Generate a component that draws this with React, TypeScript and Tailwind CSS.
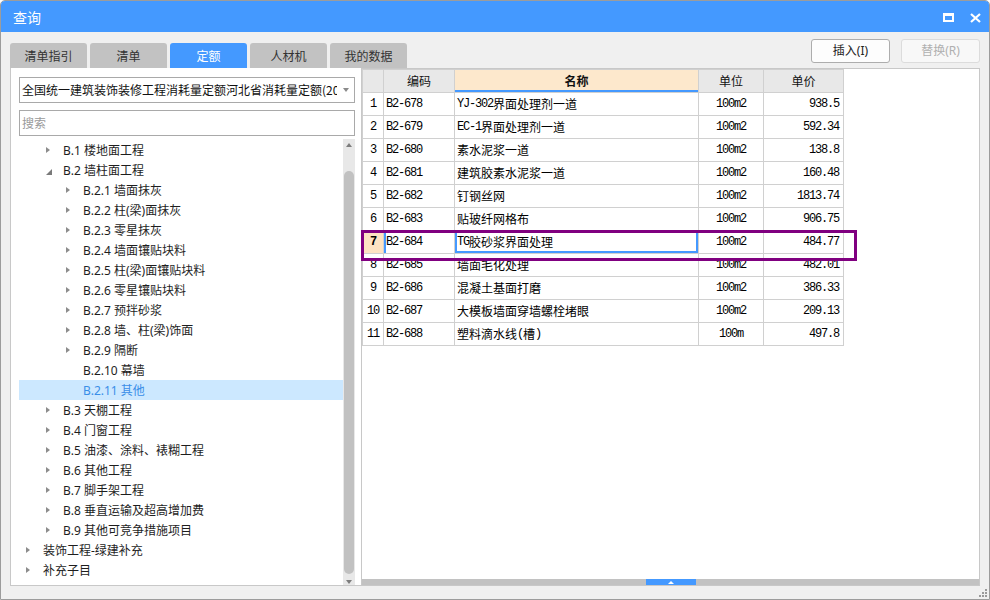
import React from "react";

type Node = { label: string; level: number; state: "c" | "e" | "n"; selected?: boolean };

const tree: Node[] = [
  { label: "B.1 楼地面工程", level: 1, state: "c" },
  { label: "B.2 墙柱面工程", level: 1, state: "e" },
  { label: "B.2.1 墙面抹灰", level: 2, state: "c" },
  { label: "B.2.2 柱(梁)面抹灰", level: 2, state: "c" },
  { label: "B.2.3 零星抹灰", level: 2, state: "c" },
  { label: "B.2.4 墙面镶贴块料", level: 2, state: "c" },
  { label: "B.2.5 柱(梁)面镶贴块料", level: 2, state: "c" },
  { label: "B.2.6 零星镶贴块料", level: 2, state: "c" },
  { label: "B.2.7 预拌砂浆", level: 2, state: "c" },
  { label: "B.2.8 墙、柱(梁)饰面", level: 2, state: "c" },
  { label: "B.2.9 隔断", level: 2, state: "c" },
  { label: "B.2.10 幕墙", level: 2, state: "n" },
  { label: "B.2.11 其他", level: 2, state: "n", selected: true },
  { label: "B.3 天棚工程", level: 1, state: "c" },
  { label: "B.4 门窗工程", level: 1, state: "c" },
  { label: "B.5 油漆、涂料、裱糊工程", level: 1, state: "c" },
  { label: "B.6 其他工程", level: 1, state: "c" },
  { label: "B.7 脚手架工程", level: 1, state: "c" },
  { label: "B.8 垂直运输及超高增加费", level: 1, state: "c" },
  { label: "B.9 其他可竞争措施项目", level: 1, state: "c" },
  { label: "装饰工程-绿建补充", level: 0, state: "c" },
  { label: "补充子目", level: 0, state: "c" },
];

const rows = [
  ["1", "B2-678", "YJ-302界面处理剂一道", "100m2", "938.5"],
  ["2", "B2-679", "EC-1界面处理剂一道", "100m2", "592.34"],
  ["3", "B2-680", "素水泥浆一道", "100m2", "138.8"],
  ["4", "B2-681", "建筑胶素水泥浆一道", "100m2", "160.48"],
  ["5", "B2-682", "钉钢丝网", "100m2", "1813.74"],
  ["6", "B2-683", "贴玻纤网格布", "100m2", "906.75"],
  ["7", "B2-684", "TG胶砂浆界面处理", "100m2", "484.77"],
  ["8", "B2-685", "墙面毛化处理", "100m2", "482.01"],
  ["9", "B2-686", "混凝土基面打磨", "100m2", "386.33"],
  ["10", "B2-687", "大模板墙面穿墙螺栓堵眼", "100m2", "209.13"],
  ["11", "B2-688", "塑料滴水线(槽)", "100m", "497.8"],
];

function Mixed({ text }: { text: string }) {
  const parts = text.split(/([\x00-\x7F]+)/).filter((p) => p.length > 0);
  return (
    <>
      {parts.map((p, i) =>
        /^[\x00-\x7F]+$/.test(p) ? (
          <span key={i} className="font-['Liberation_Mono',monospace] text-[12px] tracking-[-1.2px]">
            {p}
          </span>
        ) : (
          <span key={i} className="font-['Noto_Sans_CJK_SC',sans-serif] text-[12px]">
            {p}
          </span>
        )
      )}
    </>
  );
}

function Arrow({ state }: { state: Node["state"] }) {
  if (state === "c")
    return (
      <span className="block w-0 h-0 border-l-[4px] border-l-[#8c8c8c] border-y-[3.5px] border-y-transparent" />
    );
  if (state === "e")
    return (
      <svg width="6" height="6" viewBox="0 0 6 6" className="block mt-[3px]">
        <polygon points="6,0 6,6 0,6" fill="#7a7a7a" />
      </svg>
    );
  return null;
}

export default function App() {
  const tabs = ["清单指引", "清单", "定额", "人材机", "我的数据"];
  return (
    <div className="relative w-[990px] h-[600px] flex flex-col bg-[#f0f0f0] border border-[#9c9c9c] rounded-t-[5px] overflow-hidden font-['Noto_Sans','Noto_Sans_CJK_SC',sans-serif] text-[#1e1e1e]">
      {/* title bar */}
      <div className="h-[31px] shrink-0 bg-[#4499ff] flex items-center justify-between pl-[12px] pr-[8px]">
        <span className="text-white text-[14px] font-['Noto_Sans_CJK_SC',sans-serif] mt-[2px]">查询</span>
        <div className="flex items-center gap-[16px] mt-[2px]">
          <svg width="11" height="9" viewBox="0 0 11 9">
            <rect x="1" y="1.5" width="9" height="6.5" fill="none" stroke="white" strokeWidth="2" />
            <rect x="0" y="0" width="11" height="3" fill="white" />
          </svg>
          <svg width="11" height="10" viewBox="0 0 11 10">
            <path d="M1 1 L10 9 M10 1 L1 9" stroke="white" strokeWidth="2.2" />
          </svg>
        </div>
      </div>

      {/* tab row */}
      <div className="h-[36px] shrink-0 flex justify-between px-[9px]">
        <div className="flex items-end gap-[3px]">
          {tabs.map((t) => (
            <div
              key={t}
              className={
                t === "定额"
                  ? "w-[77px] h-[25px] rounded-t-[3px] bg-[#4499ff] text-white flex items-center justify-center text-[12px] font-['Noto_Sans_CJK_SC',sans-serif]"
                  : "w-[77px] h-[25px] rounded-t-[3px] bg-[#c2c2c2] text-[#333] flex items-center justify-center text-[12px] font-['Noto_Sans_CJK_SC',sans-serif]"
              }
            >
              {t}
            </div>
          ))}
        </div>
        <div className="flex gap-[11px] mt-[7px] h-[24px]">
          <div className="w-[79px] h-[24px] rounded-[3px] border border-[#adadad] bg-[#fdfdfd] flex items-center justify-center text-[12px] text-[#222]">
            插入(I)
          </div>
          <div className="w-[79px] h-[24px] rounded-[3px] border border-[#dcdcdc] bg-[#f8f8f8] flex items-center justify-center text-[12px] text-[#b0b0b0]">
            替换(R)
          </div>
        </div>
      </div>

      {/* main */}
      <div className="h-[518px] shrink-0 flex mx-[9px]">
        {/* left panel */}
        <div className="w-[351px] shrink-0 bg-white border-l border-b border-[#c8c8c8] pl-[8px] pr-[6px] pt-[9px] flex flex-col">
          <div className="h-[26px] shrink-0 border border-[#a9a9a9] flex items-center pl-[2px] pr-[4px] overflow-hidden">
            <span className="flex-1 min-w-0 overflow-hidden whitespace-nowrap text-[12px] text-[#111] font-['Noto_Sans_CJK_SC',sans-serif]">
              全国统一建筑装饰装修工程消耗量定额河北省消耗量定额(20
            </span>
            <span className="ml-[6px] mr-[1px] block w-0 h-0 border-t-[4px] border-t-[#8a8a8a] border-x-[3.5px] border-x-transparent" />
          </div>
          <div className="h-[26px] shrink-0 mt-[7px] border border-[#a9a9a9] flex items-center pl-[2px] text-[12px] text-[#9a9a9a] font-['Noto_Sans_CJK_SC',sans-serif]">
            搜索
          </div>
          <div className="flex-1 flex mt-[3px] min-h-0">
            <div className="flex-1 flex flex-col pt-[1px]">
              {tree.map((n) => (
                <div
                  key={n.label}
                  className={
                    n.selected
                      ? "h-[20px] shrink-0 flex items-center bg-[#cce8ff] text-[#3a8ee8]"
                      : "h-[20px] shrink-0 flex items-center"
                  }
                  style={{ paddingLeft: 7 + n.level * 20 }}
                >
                  <span className="w-[17px] shrink-0 flex items-center">
                    <Arrow state={n.state} />
                  </span>
                  <span className="text-[12px] whitespace-nowrap mt-[2px]">{n.label}</span>
                </div>
              ))}
            </div>
            <div className="w-[12px] shrink-0 bg-[#e8e8e8] flex flex-col items-center pt-[4px]">
              <span className="block w-0 h-0 border-b-[4px] border-b-[#7d7d7d] border-x-[3.5px] border-x-transparent" />
              <div className="mt-[24px] w-[10px] h-[403px] rounded-full bg-[#c1c1c1]" />
              <span className="mt-[6px] block w-0 h-0 border-t-[4px] border-t-[#7d7d7d] border-x-[3.5px] border-x-transparent" />
            </div>
          </div>
        </div>

        {/* right panel */}
        <div className="flex-1 bg-white border border-[#c8c8c8] flex flex-col">
          <div className="flex-1">
            <div className="w-[482px] border-l border-t border-[#d0d0d0]">
              <div className="flex h-[23px] border-b border-[#d0d0d0] text-[12px] font-['Noto_Sans_CJK_SC',sans-serif] text-[#111]">
                <div className="w-[21px] border-r border-[#d0d0d0] bg-[#e8e8e8]" />
                <div className="w-[71px] border-r border-[#d0d0d0] bg-[#e8e8e8] flex items-center justify-center">编码</div>
                <div className="w-[244px] border-r border-[#d0d0d0] bg-[#fde8cc] flex items-center justify-center font-bold shadow-[inset_0_-2px_0_#4499ff]">
                  名称
                </div>
                <div className="w-[65px] border-r border-[#d0d0d0] bg-[#e8e8e8] flex items-center justify-center">单位</div>
                <div className="w-[80px] border-r border-[#d0d0d0] bg-[#e8e8e8] flex items-center justify-center">单价</div>
              </div>
              {rows.map((r) => {
                const sel = r[0] === "7";
                return (
                  <div key={r[0]} className="flex h-[23px] border-b border-[#d0d0d0] text-black">
                    <div
                      className={
                        sel
                          ? "w-[21px] border-r border-[#d0d0d0] bg-[#fde3c3] flex items-center justify-center font-bold"
                          : "w-[21px] border-r border-[#d0d0d0] flex items-center justify-center"
                      }
                    >
                      <Mixed text={r[0]} />
                    </div>
                    <div
                      className={
                        sel
                          ? "w-[71px] border-r border-[#d0d0d0] flex items-center pl-[2px] shadow-[inset_2px_0_0_#4499ff]"
                          : "w-[71px] border-r border-[#d0d0d0] flex items-center pl-[2px]"
                      }
                    >
                      <Mixed text={r[1]} />
                    </div>
                    <div
                      className={
                        sel
                          ? "w-[244px] border-r border-[#d0d0d0] flex items-center pl-[2px] shadow-[inset_0_0_0_2px_#4499ff]"
                          : "w-[244px] border-r border-[#d0d0d0] flex items-center pl-[2px]"
                      }
                    >
                      <Mixed text={r[2]} />
                    </div>
                    <div className="w-[65px] border-r border-[#d0d0d0] flex items-center justify-center">
                      <Mixed text={r[3]} />
                    </div>
                    <div className="w-[80px] border-r border-[#d0d0d0] flex items-center justify-end pr-[4px]">
                      <Mixed text={r[4]} />
                    </div>
                  </div>
                );
              })}
            </div>
          </div>
          <div className="h-[6px] shrink-0 bg-[#c2c2c2] flex justify-center">
            <div className="w-[50px] h-[6px] bg-[#4499ff] flex items-center justify-center">
              <span className="block w-0 h-0 border-b-[3px] border-b-white border-x-[3px] border-x-transparent" />
            </div>
          </div>
        </div>
      </div>

      {/* annotation box */}
      <div className="absolute left-[360px] top-[229px] w-[496px] h-[31px] border-[3px] border-[#800080]" />

      {/* resize grip */}
      <div className="absolute right-[2px] bottom-[2px] w-[8px] h-[8px]">
        <span className="absolute right-0 top-0 w-[2px] h-[2px] bg-[#9a9a9a]" />
        <span className="absolute right-0 top-[3px] w-[2px] h-[2px] bg-[#9a9a9a]" />
        <span className="absolute right-[3px] top-[3px] w-[2px] h-[2px] bg-[#9a9a9a]" />
        <span className="absolute right-0 top-[6px] w-[2px] h-[2px] bg-[#9a9a9a]" />
        <span className="absolute right-[3px] top-[6px] w-[2px] h-[2px] bg-[#9a9a9a]" />
        <span className="absolute right-[6px] top-[6px] w-[2px] h-[2px] bg-[#9a9a9a]" />
      </div>
    </div>
  );
}
